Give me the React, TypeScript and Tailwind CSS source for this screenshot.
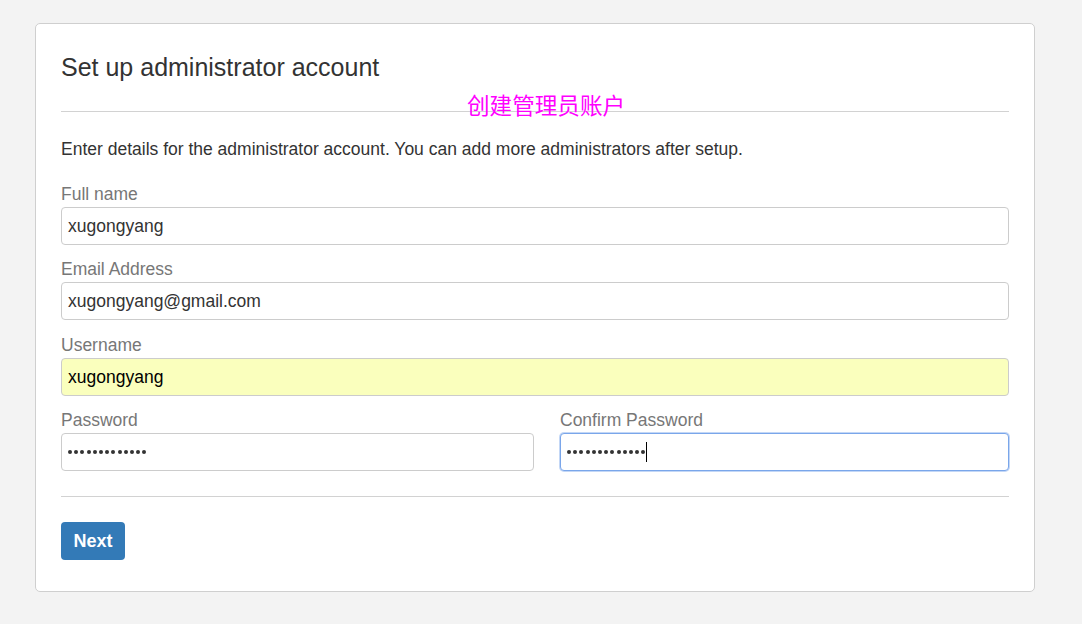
import React from "react";

const font = { fontFamily: '"Liberation Sans", Arial, sans-serif' };

function Field({
  label,
  children,
  className = "",
}: {
  label: string;
  children: React.ReactNode;
  className?: string;
}) {
  return (
    <div className={"flex flex-col " + className}>
      <div className="text-[17.5px] leading-[22px] text-[#777] mb-[2px]">{label}</div>
      {children}
    </div>
  );
}

function Box({
  children,
  variant = "normal",
}: {
  children: React.ReactNode;
  variant?: "normal" | "autofill" | "focus";
}) {
  const base =
    "h-[38px] flex items-center px-[6px] rounded-[4px] border text-[17.5px] leading-[22px]";
  const v =
    variant === "autofill"
      ? " bg-[#faffbd] border-[#ccc] text-black"
      : variant === "focus"
      ? " bg-white border-[#7aa6ea] text-[#333] shadow-[0_0_0_1px_rgba(122,166,234,0.45)]"
      : " bg-white border-[#ccc] text-[#333]";
  return <div className={base + v}>{children}</div>;
}

function Dots() {
  return (
    <span className="flex items-center gap-[2.2px]">
      {Array.from({ length: 13 }).map((_, i) => (
        <span key={i} className="block w-[4px] h-[4px] rounded-full bg-[#333]" />
      ))}
    </span>
  );
}

export default function App() {
  return (
    <div className="min-h-[624px] bg-[#f3f3f3] pt-[23px] pl-[35px]" style={font}>
      <div className="relative w-[1000px] bg-white border border-[#cfcfcf] rounded-[5px] px-[25px] pt-[30px] pb-[31px]">
        <h1 className="text-[25px] leading-[26px] text-[#333] font-normal">
          Set up administrator account
        </h1>
        <div className="h-px bg-[#d2d2d2] mt-[31px] mb-[26px]" />
        <p className="text-[17.5px] leading-[22px] text-[#333] mb-[23px]">
          Enter details for the administrator account. You can add more administrators after setup.
        </p>

        <Field label="Full name" className="mb-[13px]">
          <Box>xugongyang</Box>
        </Field>
        <Field label="Email Address" className="mb-[14px]">
          <Box>xugongyang@gmail.com</Box>
        </Field>
        <Field label="Username" className="mb-[13px]">
          <Box variant="autofill">xugongyang</Box>
        </Field>
        <div className="grid grid-cols-[473px_1fr] gap-[26px]">
          <Field label="Password">
            <Box>
              <Dots />
            </Box>
          </Field>
          <Field label="Confirm Password">
            <Box variant="focus">
              <Dots />
              <span className="block w-px h-[20px] bg-black ml-[1px]" />
            </Box>
          </Field>
        </div>

        <div className="h-px bg-[#d2d2d2] mt-[25px] mb-[25px]" />

        <button className="w-[64px] h-[38px] rounded-[4px] bg-[#337ab7] text-white font-bold text-[18px] leading-none">
          Next
        </button>

        <div
          className="absolute left-[431px] top-[70px] text-[22.6px] leading-none text-[#ff00ff] whitespace-nowrap"
          style={{ fontFamily: '"Noto Sans CJK SC", sans-serif' }}
        >
          创建管理员账户
        </div>
      </div>
    </div>
  );
}
